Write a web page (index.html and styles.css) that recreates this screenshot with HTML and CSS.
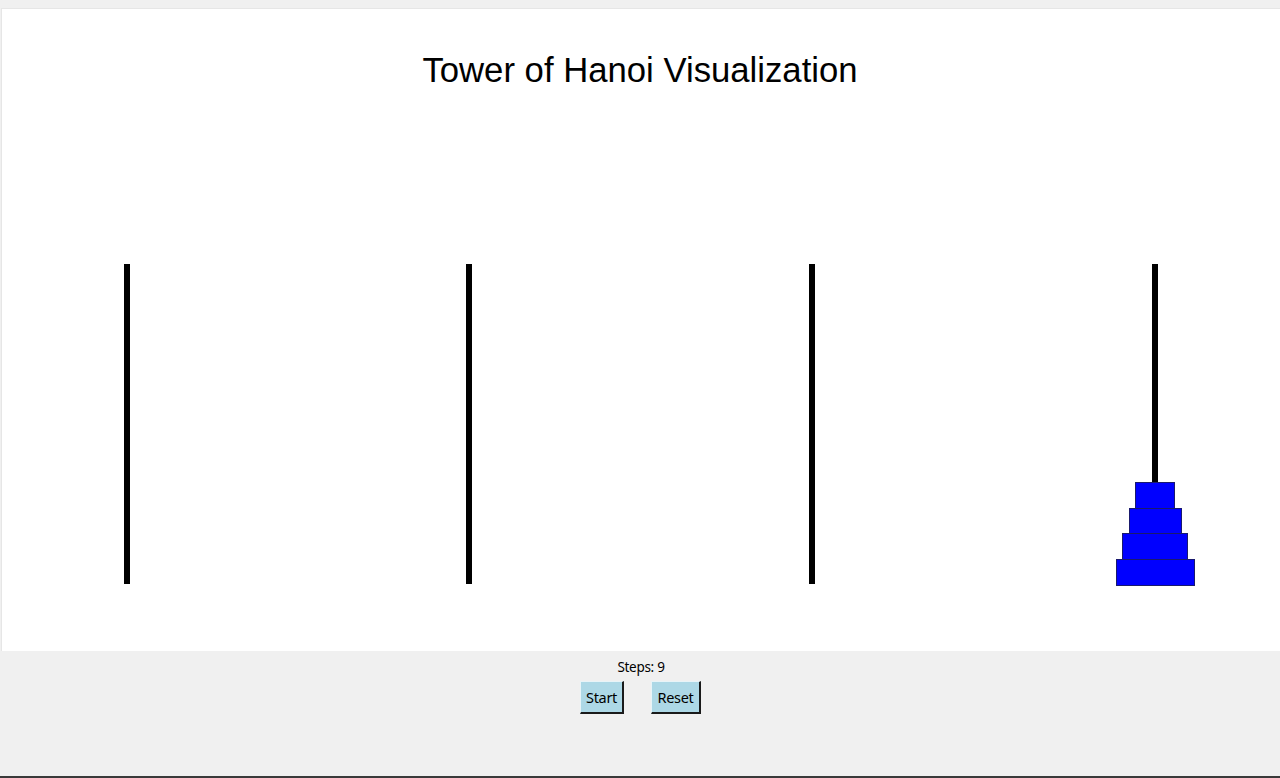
FILE: index.html
```html
<!DOCTYPE html>
<html>
<head>
<meta charset="utf-8">
<title>Tower of Hanoi Visualization</title>
<link rel="stylesheet" href="styles.css">
</head>
<body>
<div class="app">
  <div class="canvas">
    <svg class="board" width="1278" height="642" viewBox="0 0 1278 642" xmlns="http://www.w3.org/2000/svg">
      <text class="title" x="638" y="73" text-anchor="middle">Tower of Hanoi Visualization</text>
      <rect x="122" y="255" width="6" height="320" fill="#000"/>
      <rect x="464" y="255" width="6" height="320" fill="#000"/>
      <rect x="807" y="255" width="6" height="320" fill="#000"/>
      <rect x="1150" y="255" width="6" height="220" fill="#000"/>
      <rect x="1133.5" y="473.5" width="39" height="26" fill="#0000ff" stroke="#1a1a6e" stroke-width="1"/>
      <rect x="1127.5" y="499.5" width="52" height="25" fill="#0000ff" stroke="#1a1a6e" stroke-width="1"/>
      <rect x="1120.5" y="524.5" width="65" height="26" fill="#0000ff" stroke="#1a1a6e" stroke-width="1"/>
      <rect x="1114.5" y="550.5" width="78" height="26" fill="#0000ff" stroke="#1a1a6e" stroke-width="1"/>
    </svg>
  </div>
  <div class="controls">
    <div class="steps">Steps: 9</div>
    <div class="buttons">
      <button class="btn btn-start">Start</button>
      <button class="btn btn-reset">Reset</button>
    </div>
  </div>
  <div class="edge"></div>
</div>
</body>
</html>
```

FILE: styles.css
```css
html, body {
  margin: 0;
  padding: 0;
  background: #f0f0f0;
  overflow: hidden;
}

.app {
  width: 1280px;
  height: 778px;
  display: flex;
  flex-direction: column;
}

.canvas {
  margin-top: 8px;
  margin-left: 1px;
  width: 1278px;
  height: 642px;
  background: #ffffff;
  border-top: 1px solid #e6e6e6;
  border-left: 1px solid #e6e6e6;
}

.board {
  display: block;
}

.title {
  font-family: "Liberation Sans", Arial, sans-serif;
  font-size: 34.7px;
  fill: #000;
}

.controls {
  flex: 1;
  display: flex;
  flex-direction: column;
  align-items: center;
  padding-top: 7px;
}

.steps {
  font-family: "Noto Sans", "DejaVu Sans", sans-serif;
  font-size: 13.5px;
  line-height: 18px;
  color: #000;
  margin-left: 2px;
  letter-spacing: -0.3px;
}

.buttons {
  display: flex;
  gap: 27px;
  margin-top: 5px;
  margin-left: 1px;
}

.btn {
  font-family: "Noto Sans", "DejaVu Sans", sans-serif;
  font-size: 14.5px;
  line-height: 18px;
  letter-spacing: -0.3px;
  color: #000;
  background: #add8e6;
  height: 33px;
  padding: 0 3px;
  border-top: 1px solid #e8f4f8;
  border-left: 1px solid #e8f4f8;
  border-right: 2px solid #1a1a1a;
  border-bottom: 2px solid #1a1a1a;
  margin: 0;
  box-sizing: border-box;
}

.btn-start {
  width: 44px;
}

.btn-reset {
  width: 50px;
}

.edge {
  height: 2px;
  background: #3a3a3a;
}
```
